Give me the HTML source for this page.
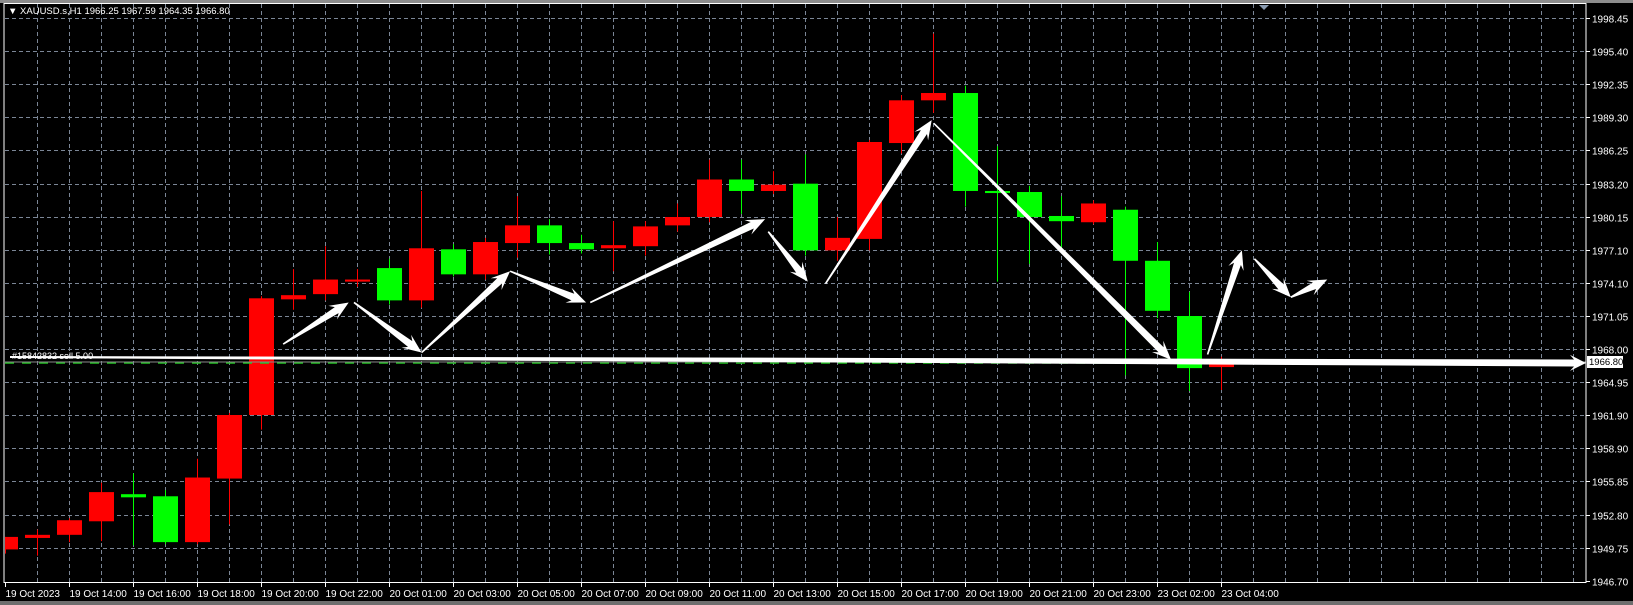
<!DOCTYPE html>
<html><head><meta charset="utf-8"><style>
html,body{margin:0;padding:0;background:#000;}
body{width:1633px;height:605px;overflow:hidden;position:relative;font-family:"Liberation Sans",sans-serif;}
svg{position:absolute;left:0;top:0;}
text{font-family:"Liberation Sans",sans-serif;font-size:10px;fill:#fff;}
</style></head><body>
<svg id="s" width="1633" height="605" xmlns="http://www.w3.org/2000/svg">
<rect x="0" y="0" width="1633" height="605" fill="#000"/>
<rect x="0" y="0" width="1633" height="3" fill="#8c8c8c"/>
<rect x="0" y="601" width="1633" height="4" fill="#6e6e6e"/>
<g id="grid" stroke="#7b8696" stroke-width="1" stroke-dasharray="4,3"></g>
<g id="candles"></g>
<line x1="5" y1="363" x2="1586" y2="363" stroke="#22c322" stroke-width="1.5" stroke-dasharray="9,8"/>
<line x1="5" y1="362" x2="1586" y2="362" stroke="#8a8a8a" stroke-width="1"/>
<g id="arrows" fill="#fff"></g>
<text x="12" y="359" style="font-size:9px">#15842832 sell 5.00</text>
<rect x="4" y="3.5" width="1582" height="579" fill="none" stroke="#fff" stroke-width="1"/>
<polygon points="1259,5 1269,5 1264,10" fill="#8a9bb0"/>
<text x="8" y="14" style="font-size:9.5px">▼ XAUUSD.s,H1  1966.25 1967.59 1964.35 1966.80</text>
<g id="axis" stroke="#fff"></g>
<g id="labels"></g>
<rect x="1587" y="356" width="36" height="12" fill="#fff"/>
<text x="1589" y="365" style="fill:#000;font-size:9.5px">1966.80</text>
</svg>
<script>
var NS="http://www.w3.org/2000/svg";
function el(p,t,a){var e=document.createElementNS(NS,t);for(var k in a)e.setAttribute(k,a[k]);p.appendChild(e);return e;}
var g=document.getElementById('grid');
for(var x=37;x<1586;x+=32)el(g,'line',{x1:x+.5,y1:4,x2:x+.5,y2:582});
var prices=["1998.45","1995.40","1992.35","1989.30","1986.25","1983.20","1980.15","1977.10","1974.10","1971.05","1968.00","1964.95","1961.90","1958.90","1955.85","1952.80","1949.75","1946.70"];
var ax=document.getElementById('axis'),lb=document.getElementById('labels');
for(var i=0;i<prices.length;i++){var y=Math.round(18+i*33.1)+.5;
 if(i<17)el(g,'line',{x1:5,y1:y,x2:1586,y2:y});
 el(ax,'line',{x1:1586,y1:y,x2:1590,y2:y});
 var t=el(lb,'text',{x:1592,y:y+4});t.textContent=prices[i];}
var times=["19 Oct 2023","19 Oct 14:00","19 Oct 16:00","19 Oct 18:00","19 Oct 20:00","19 Oct 22:00","20 Oct 01:00","20 Oct 03:00","20 Oct 05:00","20 Oct 07:00","20 Oct 09:00","20 Oct 11:00","20 Oct 13:00","20 Oct 15:00","20 Oct 17:00","20 Oct 19:00","20 Oct 21:00","20 Oct 23:00","23 Oct 02:00","23 Oct 04:00"];
for(var i=0;i<times.length;i++){var x=5+64*i+.5;el(ax,'line',{x1:x,y1:582,x2:x,y2:587});var t=el(lb,'text',{x:x,y:597});t.textContent=times[i];}
function Y(p){return 18+(p-17)*1.042;}
var C=[
['r',515,527,515,531],['r',513,516,508,533],['r',499,513,497,520],['r',472,500,463,519],
['g',474,477,454,523],['g',476,520,470,522],['r',458,520,440,522],['r',398,459,396,503],
['r',286,398,284,412],['r',283,287,258,297],['r',268,282,236,288],['r',268,270,258,275],
['g',257,288,248,292],['r',238,288,183,295],['g',239,263,234,265],['r',232,263,228,268],
['r',216,233,188,247],['g',216,233,210,244],['g',233,239,225,243],['r',235,238,212,260],
['r',217,236,212,245],['r',208,216,195,222],['r',172,208,153,213],['g',172,183,153,205],
['r',177,183,164,186],['g',176,240,148,245],['r',228,240,208,250],['r',136,229,134,240],
['r',96,137,91,147],['r',89,96,32,108],['g',89,183,82,198],['g',183,185,140,270],
['g',184,208,178,253],['g',207,212,188,240],['r',195,213,192,215],['g',201,250,198,360],
['g',250,298,232,305],['g',303,353,280,375],['r',349,352,342,374]];
var cg=document.getElementById('candles');
for(var i=0;i<C.length;i++){var c=C[i],x=5+32*i,col=c[0]=='r'?'#ff0000':'#00ff00';
 var wt=Y(c[3]),wb=Y(c[4]),bt=Y(c[1]),bb=Y(c[2]);
 el(cg,'rect',{x:x,y:wt,width:1,height:wb-wt,fill:col});
 var bx=Math.max(5,x-12),bw=x+13-bx;
 el(cg,'rect',{x:bx,y:bt,width:bw,height:Math.max(2,bb-bt),fill:col});}
var ag=document.getElementById('arrows');
function arrow(x1,y1,x2,y2,w0,w1,hl,hw){var dx=x2-x1,dy=y2-y1,L=Math.sqrt(dx*dx+dy*dy),ux=dx/L,uy=dy/L,nx=-uy,ny=ux;
 function P(a,b){return (x1+ux*a+nx*b).toFixed(1)+','+(y1+uy*a+ny*b).toFixed(1);}
 var pts=[P(0,w0),P(L-hl*0.75,w1),P(L-hl,hw),P(L,0),P(L-hl,-hw),P(L-hl*0.75,-w1),P(0,-w0)];
 el(ag,'polygon',{points:pts.join(' ')});}
function A(a,b,c,d){arrow(a*1.041,Y(b),c*1.041,Y(d),0.8,3.6,19,8);}
A(272,330,335,290);A(340,290,405,338);A(405,338,490,260);A(490,260,563,290);
A(567,290,735,210);A(738,222,776,270);A(793,272,895,115);A(897,118,1125,345);
A(1160,340,1193,240);A(1205,248,1240,285);A(1240,285,1275,268);
arrow(10,357,1586,363,1,3.5,16,8);
</script>
</body></html>
